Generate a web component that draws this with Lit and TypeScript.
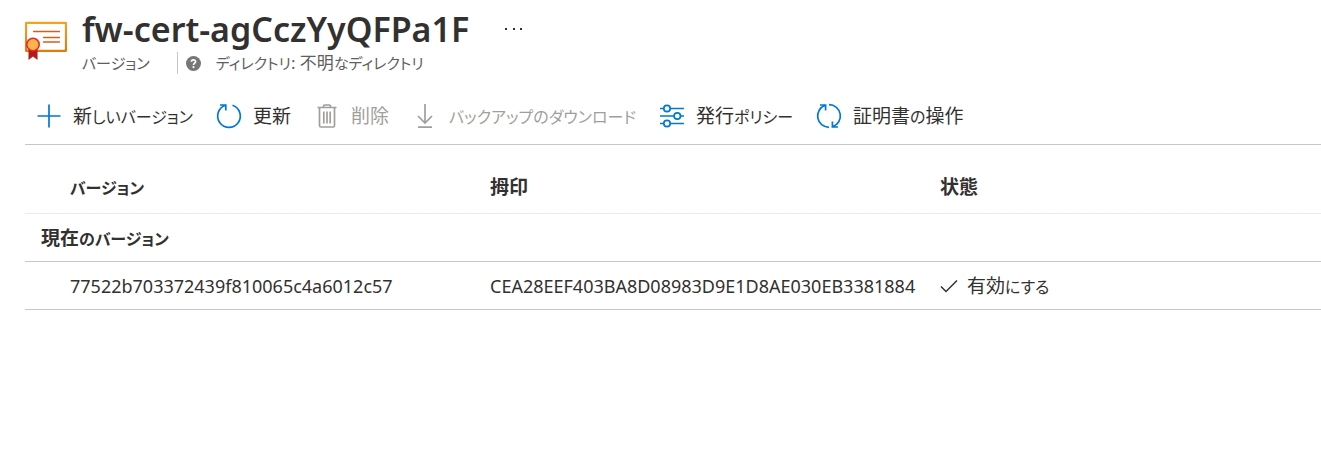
import { LitElement, html, svg, css, nothing, type TemplateResult } from "lit";
import { customElement, property } from "lit/decorators.js";

const icons: Record<string, TemplateResult> = {
  add: svg`<path d="M12 .5v23M.5 12h23" />`,
  refresh: svg`<path d="M8.500 1.300A11.300 11.300 0 1 0 15.500 1.300M3 1h5.800v5.500" />`,
  trash: svg`<path d="M2.500 3.500h19M8.500 3.500V2.200a1.200 1.200 0 0 1 1.200-1.200h4.600a1.200 1.200 0 0 1 1.200 1.200v1.300M4.500 4v17.600a1.400 1.400 0 0 0 1.400 1.400h12.200a1.400 1.400 0 0 0 1.400-1.400V4M8.800 7.500v12M12 7.500v12M15.200 7.500v12" />`,
  download: svg`<path d="M12 0v18.500M5 12l7 7 7-7M5 23.200h14" />`,
  policy: svg`<path d="M0 4.500h3.600M10.400 4.500H24M0 12h14M20.600 12H24M0 19.500h3.600M10.400 19.500H24" /><circle cx="7" cy="4.500" r="3.200" /><circle cx="17.300" cy="12" r="3.200" /><circle cx="7" cy="19.500" r="3.200" />`,
  sync: svg`<path d="M12 23.300A11.300 11.300 0 0 1 8.300 1.300M3 1h5.600v5.500M12 .7A11.300 11.300 0 0 1 15.700 22.700M21 23h-5.600v-5.500" />`,
};

/** Wraps runs of kana so that they can be set smaller than the kanji beside them. */
const kana = (text: string) =>
  text
    .split(/([ぁ-んァ-ヶー]+)/)
    .filter(Boolean)
    .map((run) => (/^[ぁ-んァ-ヶー]/.test(run) ? html`<span class="kana">${run}</span>` : run));

@customElement("command-button")
class CommandButton extends LitElement {
  @property() icon = "add";
  @property() label = "";
  @property({ type: Boolean }) disabled = false;

  static styles = css`
    :host {
      display: block;
    }
    .command {
      display: flex;
      align-items: center;
      gap: 12px;
      padding: 0;
      border: 0;
      background: none;
      color: #323130;
      font: inherit;
      font-size: 19px;
      line-height: 28px;
      font-feature-settings: "palt";
      white-space: nowrap;
      cursor: pointer;
    }
    .command:disabled {
      color: #a19f9d;
      cursor: default;
    }
    .kana {
      font-size: 16px;
      line-height: 16px;
    }
    .icon {
      width: 24px;
      height: 24px;
      flex: none;
      overflow: visible;
      fill: none;
      stroke: #0078d4;
      stroke-width: 1.7;
    }
    .command:disabled .icon {
      stroke: #a19f9d;
    }
  `;

  render() {
    return html`<button class="command" type="button" ?disabled=${this.disabled}>
      <svg class="icon" viewBox="0 0 24 24" aria-hidden="true">${icons[this.icon] ?? nothing}</svg>
      <span>${kana(this.label)}</span>
    </button>`;
  }
}

const commands = [
  { icon: "add", label: "新しいバージョン" },
  { icon: "refresh", label: "更新" },
  { icon: "trash", label: "削除", disabled: true },
  { icon: "download", label: "バックアップのダウンロード", disabled: true },
  { icon: "policy", label: "発行ポリシー" },
  { icon: "sync", label: "証明書の操作" },
];

const versions = [
  {
    id: "77522b703372439f810065c4a6012c57",
    thumbprint: "CEA28EEF403BA8D08983D9E1D8AE030EB3381884",
    status: "有効にする",
  },
];

@customElement("app-root")
class AppRoot extends LitElement {
  static styles = css`
    :host {
      display: block;
      padding-left: 25px;
      background: #fff;
      color: #323130;
      font-family: "Noto Sans", "Noto Sans CJK JP", sans-serif;
      font-feature-settings: "palt";
    }
    .kana {
      font-size: 16px;
      line-height: 16px;
    }
    .header {
      display: flex;
      gap: 15px;
      padding-top: 8px;
    }
    .certificate {
      width: 42px;
      height: 42px;
      flex: none;
      margin-top: 12px;
    }
    .title-row {
      display: flex;
      align-items: center;
      gap: 32px;
    }
    .title {
      margin: 0;
      font-size: 34px;
      line-height: 42px;
      font-weight: 600;
    }
    .more {
      display: flex;
      padding: 4px;
      border: 0;
      background: none;
      cursor: pointer;
    }
    .subtitle {
      display: flex;
      align-items: center;
      font-size: 17px;
      line-height: 22px;
      margin-top: 2px;
      color: #605e5c;
    }
    .subtitle .kana {
      font-size: 15px;
    }
    .directory {
      display: flex;
      align-items: center;
      gap: 15px;
      margin-left: 27px;
      padding-left: 8px;
      border-left: 1px solid #c8c6c4;
    }
    .toolbar {
      display: flex;
      align-items: center;
      gap: 24px;
      margin-top: 28px;
      padding: 0 12px 14px;
      border-bottom: 1px solid #c8c6c4;
    }
    .versions {
      width: 100%;
      border-collapse: collapse;
      table-layout: fixed;
      text-align: left;
    }
    .col-version {
      width: 465px;
    }
    .col-thumbprint {
      width: 450px;
    }
    .versions th,
    .versions td {
      height: 47px;
      padding: 0;
      border-bottom: 1px solid #c8c6c4;
      font-size: 19px;
      line-height: 28px;
      white-space: nowrap;
    }
    .versions th {
      font-weight: 600;
    }
    .versions .column {
      height: 53px;
      padding-top: 15px;
      border-bottom-color: #edebe9;
    }
    .versions .column:first-child,
    .versions .id {
      padding-left: 45px;
    }
    .versions .group {
      padding-left: 16px;
    }
    .versions .code {
      font-size: 18px;
    }
    .status {
      display: flex;
      align-items: center;
      gap: 9px;
    }
  `;

  render() {
    return html`
      <header class="header">
        <svg class="certificate" viewBox="0 0 42 42" aria-hidden="true">
          <defs>
            <linearGradient id="frame" x1="0" y1="0" x2="0" y2="1">
              <stop offset="0" stop-color="#f9a01f" />
              <stop offset="1" stop-color="#e07a0a" />
            </linearGradient>
          </defs>
          <rect x="1" y="2.800" width="40" height="28" rx=".5" fill="#fff" stroke="url(#frame)" stroke-width="2.200" />
          <path d="M8.500 11.500h26M18.500 17.500h16M18.500 22h16" stroke="#d0601a" stroke-width="1.300" stroke-linecap="round" />
          <path d="M3.500 28h9v12l-4.500-3.500L3.500 40z" fill="#b31b1b" />
          <circle cx="8" cy="24.500" r="6.200" fill="#ffb34d" stroke="#e62b2b" stroke-width="1.600" />
        </svg>
        <div>
          <div class="title-row">
            <h1 class="title">fw-cert-agCczYyQFPa1F</h1>
            <button class="more" type="button" aria-label="その他">
              <svg width="18" height="4" viewBox="0 0 18 4" fill="#323130">
                <path d="M0 1h2v2H0zM8 1h2v2H8zM15 1h2v2h-2z" />
              </svg>
            </button>
          </div>
          <div class="subtitle">
            <span>${kana("バージョン")}</span>
            <div class="directory">
              <svg width="15" height="15" viewBox="0 0 15 15" aria-hidden="true">
                <circle cx="7.500" cy="7.500" r="7.500" fill="#797775" />
                <path d="M5.400 5.800C5.400 3.300 9.600 3.300 9.600 5.700 9.600 7.200 7.500 7.200 7.500 9" fill="none" stroke="#fff" stroke-width="1.700" />
                <circle cx="7.500" cy="11.100" r="1.100" fill="#fff" />
              </svg>
              <span>${kana("ディレクトリ: 不明なディレクトリ")}</span>
            </div>
          </div>
        </div>
      </header>

      <div class="toolbar" role="toolbar">
        ${commands.map(
          (c) => html`<command-button .icon=${c.icon} .label=${c.label} .disabled=${c.disabled ?? false}></command-button>`
        )}
      </div>

      <table class="versions">
        <colgroup>
          <col class="col-version" />
          <col class="col-thumbprint" />
          <col />
        </colgroup>
        <thead>
          <tr>
            <th class="column" scope="col">${kana("バージョン")}</th>
            <th class="column" scope="col">拇印</th>
            <th class="column" scope="col">状態</th>
          </tr>
        </thead>
        <tbody>
          <tr>
            <th class="group" colspan="3" scope="rowgroup">${kana("現在のバージョン")}</th>
          </tr>
          ${versions.map(
            (v) => html`<tr>
              <td class="id code">${v.id}</td>
              <td class="code">${v.thumbprint}</td>
              <td>
                <div class="status">
                  <svg width="18" height="18" viewBox="0 0 18 18" fill="none" stroke="#323130" stroke-width="1.500" aria-hidden="true">
                    <path d="M1 9.500l5 5L17 3.500" />
                  </svg>
                  <span>${kana(v.status)}</span>
                </div>
              </td>
            </tr>`
          )}
        </tbody>
      </table>
    `;
  }
}
